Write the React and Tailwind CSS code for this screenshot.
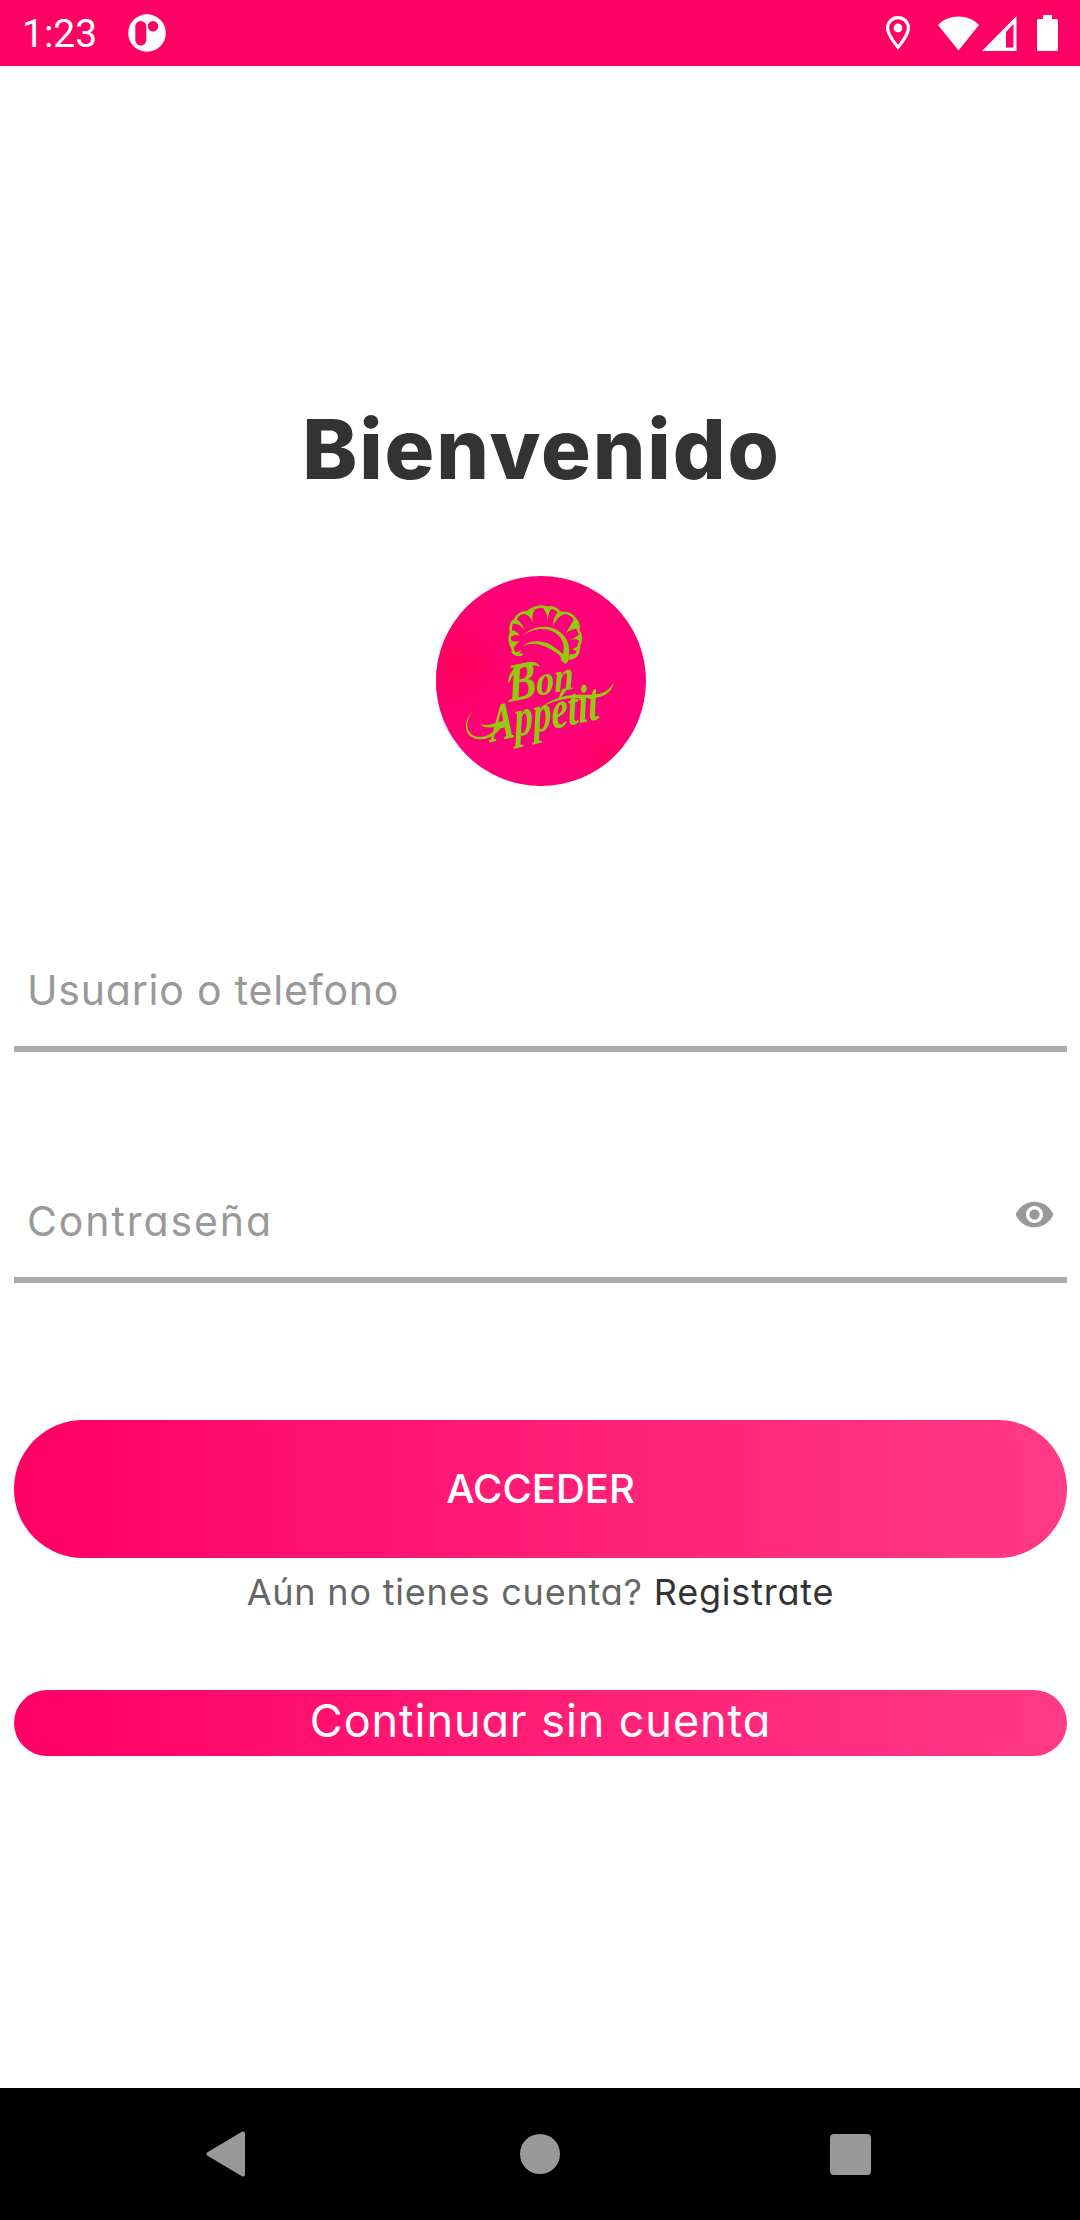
// src/App.jsx
import React, { useState } from "react";
import { MdVisibility, MdVisibilityOff } from "react-icons/md";

function StatusBar() {
  return (
    <div className="flex h-[66px] items-center bg-[#ff0065] pl-[22px] pr-[22px] text-white">
      <span className="w-[106px] pt-[3px] font-['Roboto',sans-serif] text-[39px] leading-none">1:23</span>
      <svg width="38" height="38" viewBox="0 0 38 38">
        <circle cx="19" cy="19" r="18.8" fill="#fff" />
        <rect x="7.3" y="7" width="11" height="24.5" rx="5.5" fill="#ff0065" />
        <circle cx="25" cy="12.2" r="5.2" fill="#ff0065" />
      </svg>
      <div className="ml-auto flex items-center">
        <svg className="mr-[28px]" width="24" height="34" viewBox="0 0 24 34">
          <path d="M12 1.6C6.200 1.600 1.600 6.200 1.600 12c0 7.200 10.400 19.200 10.400 19.200S22.400 19.200 22.400 12C22.400 6.200 17.800 1.600 12 1.600z" fill="none" stroke="#fff" strokeWidth="3.200" />
          <circle cx="12" cy="12" r="4.400" fill="#fff" />
        </svg>
        <svg className="mr-[3px]" width="41" height="35" viewBox="0 0 41 35">
          <path d="M20.500 34.500 0 9C5.500 3.300 12.500.4 20.500.4S35.500 3.300 41 9z" fill="#fff" />
        </svg>
        <svg className="mr-[20px]" width="35" height="35" viewBox="0 0 35 35">
          <path fillRule="evenodd" d="M34.500 0v35H0zM31.500 8 24 16v15.500h7.500z" fill="#fff" />
        </svg>
        <svg width="21" height="36" viewBox="0 0 21 36">
          <path d="M6 0h9v4h4.500A1.500 1.500 0 0 1 21 5.500v29a1.500 1.500 0 0 1-1.500 1.500h-18A1.500 1.500 0 0 1 0 34.500v-29A1.500 1.500 0 0 1 1.500 4H6z" fill="#fff" />
        </svg>
      </div>
    </div>
  );
}

function Logo() {
  return (
    <svg className="mx-auto mt-[81px] block" width="210" height="210" viewBox="0 0 210 210">
      <defs>
        <radialGradient id="glowLeft" cx="0.1" cy="0.42" r="0.5">
          <stop offset="0" stopColor="#ff0058" />
          <stop offset="1" stopColor="#ff0078" stopOpacity="0" />
        </radialGradient>
        <radialGradient id="glowRight" cx="0.8" cy="0.85" r="0.25">
          <stop offset="0" stopColor="#ff0064" />
          <stop offset="1" stopColor="#ff0078" stopOpacity="0" />
        </radialGradient>
      </defs>
      <circle cx="105" cy="105" r="105" fill="#ff0078" />
      <circle cx="105" cy="105" r="105" fill="url(#glowLeft)" />
      <circle cx="105" cy="105" r="105" fill="url(#glowRight)" />

      {/* chef hat */}
      <path
        d="M85.500 78.500C81 80 77 77 76.500 72 73.500 67 73 61 75 56c-1-6 0-10 4-12 2-5 7-8 13-8 5-5 14-7 20-4 4-2 9 1 12 5 6-1 12 1 15 6 4 4 4 8 3 11 4 5 3 11 1 15 0 7-2 13-9 13"
        fill="none"
        stroke="#93c90e"
        strokeWidth="2.600"
        strokeLinecap="round"
        strokeLinejoin="round"
      />
      <g fill="#93c90e">
        <path d="M87 60c9-11 27-12 37-4 9 7 11 17 8 29l-2 3-5-5c4-8 4-18-3-24-9-8-24-8-35 1z" />
        <path d="M87 70c6-6 19-6 28-1 7 4 12 9 15 13l-1 6-4-4c1-4-5-8-11-11-9-5-18-7-27-3z" />
        <path d="M75 75c4 2 7 1 11-1-2 2-3 4-5 5h5c-5 2-10 0-11-4zM75 64c3 2 6 2 9 1-3 2-5 5-7 8zM75 54c4 0 7 3 9 6-4-2-7-1-9 1zM79 43c5 2 8 6 9 11-3-5-7-7-11-6zM90 35l9-1c-3 4-3 7-2 13-2-5-4-8-9-9zM106 31h12c-5 3-6 7-6 15-1-8-2-11-6-15zM123 35l6 3c-6 2-9 6-12 12 0-7 2-11 6-15zM139 41l4 12c-4-1-9 1-13 4 3-6 6-9 9-16zM145 56l-1 9c-3-2-6-2-10-1 5-2 8-4 11-8zM144 67l-3 9c-2-2-4-3-7-3 5 0 7-2 10-6zM142 75l-5 8-5 1 2-6c3 1 5 0 8-3z" />
      </g>

      <g fill="#93c90e" fontFamily="'Liberation Serif', serif" fontStyle="italic" fontWeight="700">
        <text transform="translate(73 126) rotate(-11) skewX(-6)" fontSize="54" textLength="29" lengthAdjust="spacingAndGlyphs">B</text>
        <text transform="translate(101 120) rotate(-11) skewX(-8) scale(1 1.1)" fontSize="38" textLength="38" lengthAdjust="spacingAndGlyphs">on</text>
        <text transform="translate(55 166) rotate(-12) skewX(-8) scale(1 1.15)" fontSize="46" textLength="111" lengthAdjust="spacingAndGlyphs">Appétit</text>
      </g>

      {/* swashes around the lettering */}
      <g fill="#93c90e">
        <path d="M37 135c-9 11-7 24 5 26 11 1 20-8 28-20l-1 5c-7 12-17 19-28 17-15-3-13-20-4-28z" />
        <path d="M44 148c5 2 11 1 18-2l8-2-1 4c-9 3-19 6-25 0z" />
        <path d="M102 134c10-9 23-15 38-15 16-1 29 3 38-13-3 16-19 17-35 16-16 0-28 3-41 12z" />
        <path d="M72 108c0-14 12-23 24-22 4 0 7 2 8 5-8-4-25 0-30 14z" />
      </g>
    </svg>
  );
}

function NavBar() {
  return (
    <div className="flex h-[132px] items-center bg-black pl-[206px]">
      <svg className="mr-[274px]" width="40" height="46" viewBox="0 0 40 46">
        <path d="M2.500 23 37 2.500v41z" fill="#999" stroke="#999" strokeWidth="4" strokeLinejoin="round" />
      </svg>
      <div className="mr-[270px] size-10 rounded-full bg-[#999]" />
      <div className="size-[41px] rounded-[4px] bg-[#999]" />
    </div>
  );
}

const fieldClass =
  "h-[110px] w-full min-w-0 bg-transparent pb-[3px] pl-[13px] text-[41px] text-[#333] outline-none placeholder:text-[#999] placeholder:opacity-100";

export default function App() {
  const [user, setUser] = useState("");
  const [password, setPassword] = useState("");
  const [visible, setVisible] = useState(false);

  return (
    <div className="flex h-[2220px] w-[1080px] flex-col overflow-hidden bg-white font-['Inter','Open_Sans',sans-serif] [font-feature-settings:'cv11'_1]">
      <StatusBar />

      <main className="flex-1 pl-3.5 pr-[13px] pt-[337px]">
        <h1 className="pl-[2px] text-center text-[83px] font-extrabold leading-[92px] tracking-[1.9px] text-[#333]">Bienvenido</h1>

        <Logo />

        <div className="mt-[150px] border-b-[6px] border-[#acacac]">
          <input
            className={`${fieldClass} tracking-[0.8px]`}
            placeholder="Usuario o telefono"
            value={user}
            onChange={(e) => setUser(e.target.value)}
          />
        </div>

        <div className="mt-[115px] flex border-b-[6px] border-[#acacac]">
          <input
            className={`${fieldClass} tracking-[1.9px]`}
            type={visible ? "text" : "password"}
            placeholder="Contraseña"
            value={password}
            onChange={(e) => setPassword(e.target.value)}
          />
          <button className="mr-3 pb-[15px] text-[41px] text-[#999]" onClick={() => setVisible(!visible)}>
            {visible ? <MdVisibilityOff /> : <MdVisibility />}
          </button>
        </div>

        <button className="mt-[137px] block h-[138px] w-full rounded-full bg-linear-to-r/srgb from-[#ff0065] to-[#ff3a87] pb-px text-[40px] font-medium text-white">
          ACCEDER
        </button>

        <p className="mt-[14px] text-center text-[36px] leading-[41px] tracking-[0.8px] text-[#666]">
          Aún no tienes cuenta? <span className="text-[#333]">Registrate</span>
        </p>

        <button className="mt-[77px] block h-[66px] w-full rounded-full bg-linear-to-r/srgb from-[#ff0065] to-[#ff3a87] pb-[4px] text-[45px] leading-[62px] tracking-[0.9px] text-white">
          Continuar sin cuenta
        </button>
      </main>

      <NavBar />
    </div>
  );
}
